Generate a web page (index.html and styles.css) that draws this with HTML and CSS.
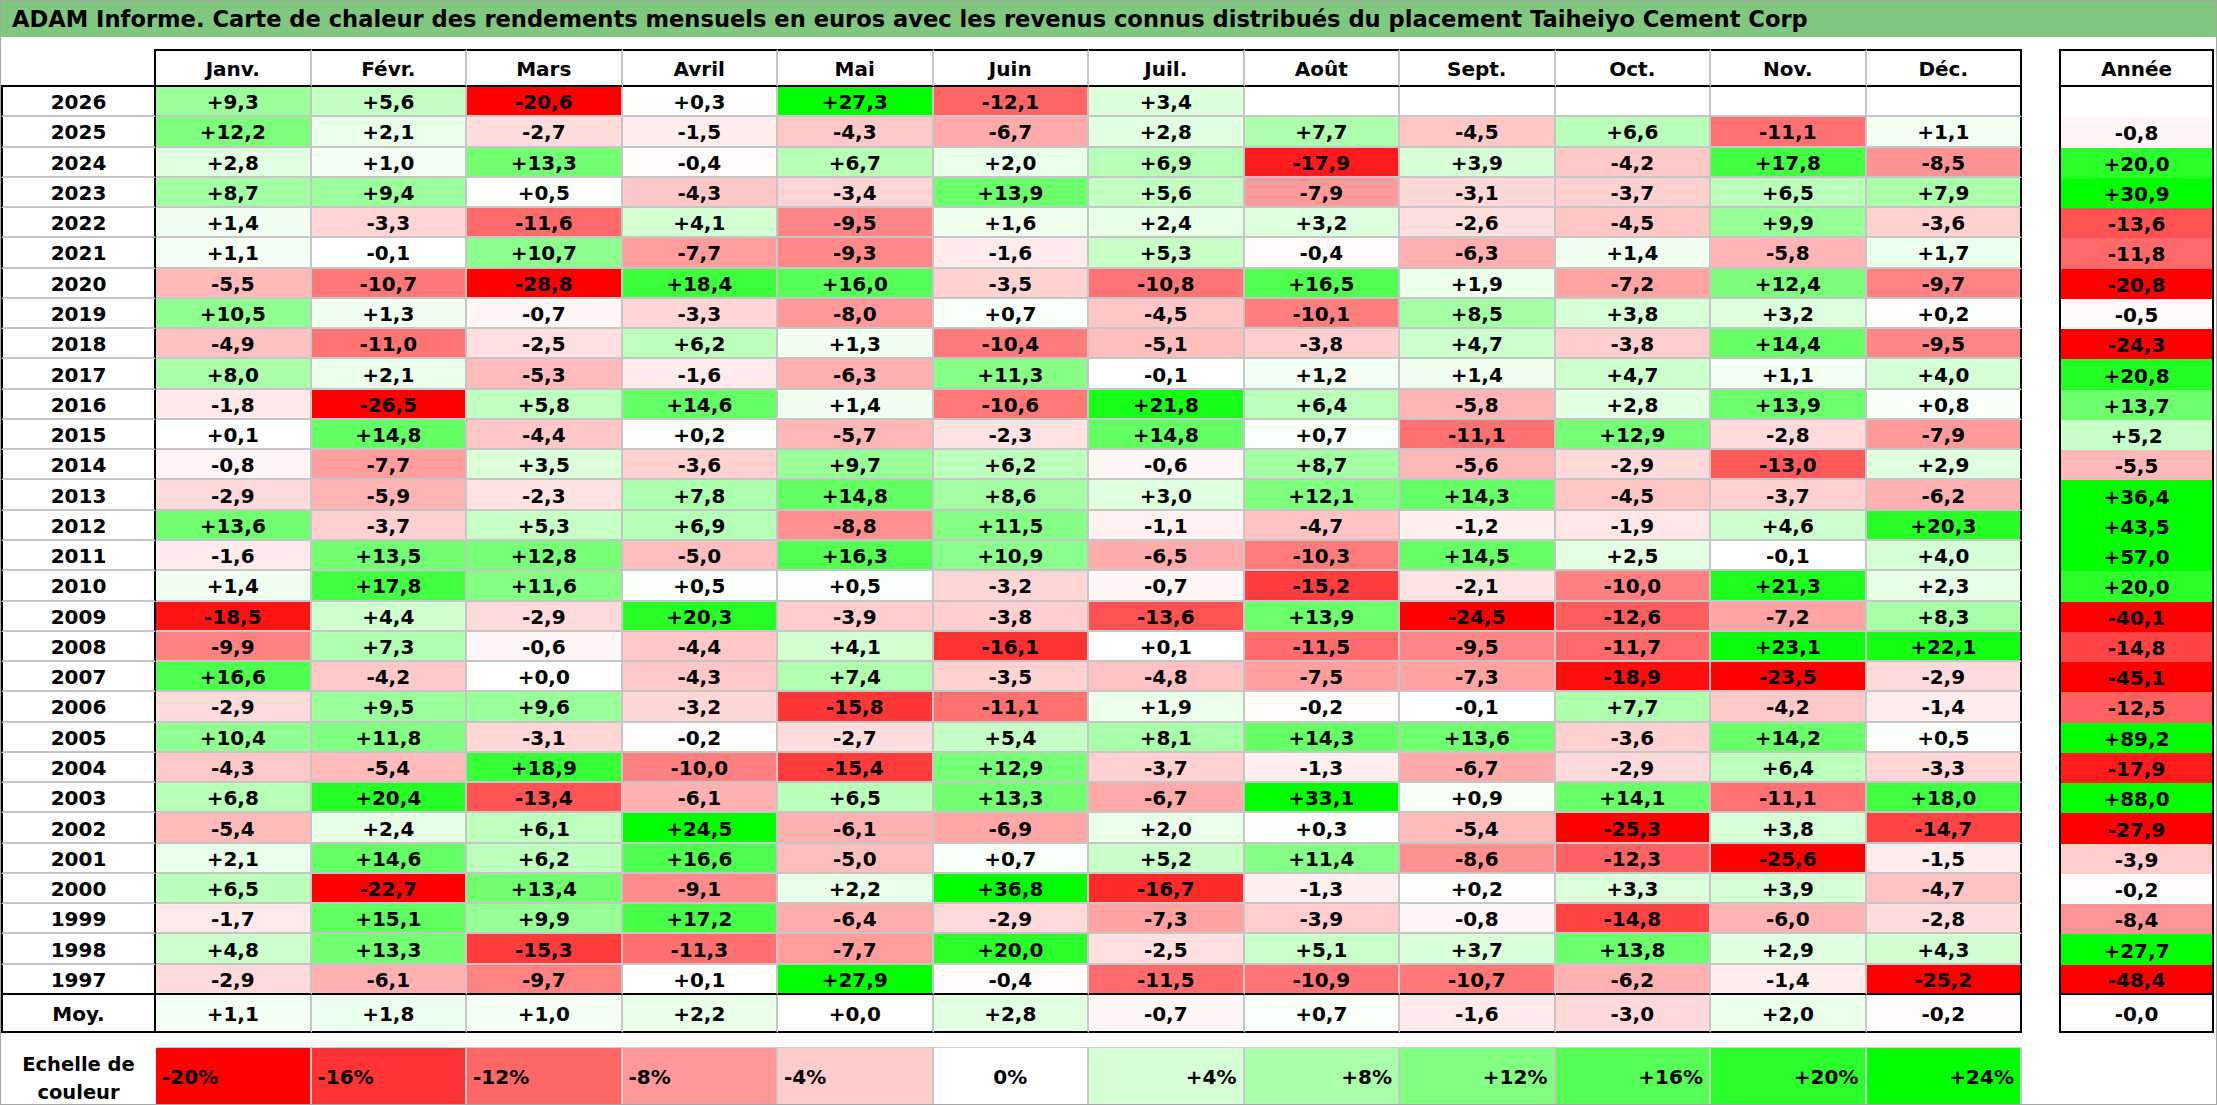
FILE: index.html
```html
<!DOCTYPE html>
<html lang="fr">
<head>
<meta charset="utf-8">
<title>ADAM Informe - Taiheiyo Cement Corp</title>
<link rel="stylesheet" href="styles.css">
</head>
<body>
<div class="frame">
  <div class="title">ADAM Informe. Carte de chaleur des rendements mensuels en euros avec les revenus connus distribués du placement Taiheiyo Cement Corp</div>
  <div class="tables">
    <div class="heat">
      <div class="r">
        <div class="corner"></div>
        <div class="hd">Janv.</div><div class="hd">Févr.</div><div class="hd">Mars</div><div class="hd">Avril</div><div class="hd">Mai</div><div class="hd">Juin</div><div class="hd">Juil.</div><div class="hd">Août</div><div class="hd">Sept.</div><div class="hd">Oct.</div><div class="hd">Nov.</div><div class="hd end">Déc.</div>
      </div>
      <div class="r"><div class="yl">2026</div><div class="v">+9,3</div><div class="v">+5,6</div><div class="v">-20,6</div><div class="v">+0,3</div><div class="v">+27,3</div><div class="v">-12,1</div><div class="v">+3,4</div><div class="v"></div><div class="v"></div><div class="v"></div><div class="v"></div><div class="v end"></div></div>
      <div class="r"><div class="yl">2025</div><div class="v">+12,2</div><div class="v">+2,1</div><div class="v">-2,7</div><div class="v">-1,5</div><div class="v">-4,3</div><div class="v">-6,7</div><div class="v">+2,8</div><div class="v">+7,7</div><div class="v">-4,5</div><div class="v">+6,6</div><div class="v">-11,1</div><div class="v end">+1,1</div></div>
      <div class="r"><div class="yl">2024</div><div class="v">+2,8</div><div class="v">+1,0</div><div class="v">+13,3</div><div class="v">-0,4</div><div class="v">+6,7</div><div class="v">+2,0</div><div class="v">+6,9</div><div class="v">-17,9</div><div class="v">+3,9</div><div class="v">-4,2</div><div class="v">+17,8</div><div class="v end">-8,5</div></div>
      <div class="r"><div class="yl">2023</div><div class="v">+8,7</div><div class="v">+9,4</div><div class="v">+0,5</div><div class="v">-4,3</div><div class="v">-3,4</div><div class="v">+13,9</div><div class="v">+5,6</div><div class="v">-7,9</div><div class="v">-3,1</div><div class="v">-3,7</div><div class="v">+6,5</div><div class="v end">+7,9</div></div>
      <div class="r"><div class="yl">2022</div><div class="v">+1,4</div><div class="v">-3,3</div><div class="v">-11,6</div><div class="v">+4,1</div><div class="v">-9,5</div><div class="v">+1,6</div><div class="v">+2,4</div><div class="v">+3,2</div><div class="v">-2,6</div><div class="v">-4,5</div><div class="v">+9,9</div><div class="v end">-3,6</div></div>
      <div class="r"><div class="yl">2021</div><div class="v">+1,1</div><div class="v">-0,1</div><div class="v">+10,7</div><div class="v">-7,7</div><div class="v">-9,3</div><div class="v">-1,6</div><div class="v">+5,3</div><div class="v">-0,4</div><div class="v">-6,3</div><div class="v">+1,4</div><div class="v">-5,8</div><div class="v end">+1,7</div></div>
      <div class="r"><div class="yl">2020</div><div class="v">-5,5</div><div class="v">-10,7</div><div class="v">-28,8</div><div class="v">+18,4</div><div class="v">+16,0</div><div class="v">-3,5</div><div class="v">-10,8</div><div class="v">+16,5</div><div class="v">+1,9</div><div class="v">-7,2</div><div class="v">+12,4</div><div class="v end">-9,7</div></div>
      <div class="r"><div class="yl">2019</div><div class="v">+10,5</div><div class="v">+1,3</div><div class="v">-0,7</div><div class="v">-3,3</div><div class="v">-8,0</div><div class="v">+0,7</div><div class="v">-4,5</div><div class="v">-10,1</div><div class="v">+8,5</div><div class="v">+3,8</div><div class="v">+3,2</div><div class="v end">+0,2</div></div>
      <div class="r"><div class="yl">2018</div><div class="v">-4,9</div><div class="v">-11,0</div><div class="v">-2,5</div><div class="v">+6,2</div><div class="v">+1,3</div><div class="v">-10,4</div><div class="v">-5,1</div><div class="v">-3,8</div><div class="v">+4,7</div><div class="v">-3,8</div><div class="v">+14,4</div><div class="v end">-9,5</div></div>
      <div class="r"><div class="yl">2017</div><div class="v">+8,0</div><div class="v">+2,1</div><div class="v">-5,3</div><div class="v">-1,6</div><div class="v">-6,3</div><div class="v">+11,3</div><div class="v">-0,1</div><div class="v">+1,2</div><div class="v">+1,4</div><div class="v">+4,7</div><div class="v">+1,1</div><div class="v end">+4,0</div></div>
      <div class="r"><div class="yl">2016</div><div class="v">-1,8</div><div class="v">-26,5</div><div class="v">+5,8</div><div class="v">+14,6</div><div class="v">+1,4</div><div class="v">-10,6</div><div class="v">+21,8</div><div class="v">+6,4</div><div class="v">-5,8</div><div class="v">+2,8</div><div class="v">+13,9</div><div class="v end">+0,8</div></div>
      <div class="r"><div class="yl">2015</div><div class="v">+0,1</div><div class="v">+14,8</div><div class="v">-4,4</div><div class="v">+0,2</div><div class="v">-5,7</div><div class="v">-2,3</div><div class="v">+14,8</div><div class="v">+0,7</div><div class="v">-11,1</div><div class="v">+12,9</div><div class="v">-2,8</div><div class="v end">-7,9</div></div>
      <div class="r"><div class="yl">2014</div><div class="v">-0,8</div><div class="v">-7,7</div><div class="v">+3,5</div><div class="v">-3,6</div><div class="v">+9,7</div><div class="v">+6,2</div><div class="v">-0,6</div><div class="v">+8,7</div><div class="v">-5,6</div><div class="v">-2,9</div><div class="v">-13,0</div><div class="v end">+2,9</div></div>
      <div class="r"><div class="yl">2013</div><div class="v">-2,9</div><div class="v">-5,9</div><div class="v">-2,3</div><div class="v">+7,8</div><div class="v">+14,8</div><div class="v">+8,6</div><div class="v">+3,0</div><div class="v">+12,1</div><div class="v">+14,3</div><div class="v">-4,5</div><div class="v">-3,7</div><div class="v end">-6,2</div></div>
      <div class="r"><div class="yl">2012</div><div class="v">+13,6</div><div class="v">-3,7</div><div class="v">+5,3</div><div class="v">+6,9</div><div class="v">-8,8</div><div class="v">+11,5</div><div class="v">-1,1</div><div class="v">-4,7</div><div class="v">-1,2</div><div class="v">-1,9</div><div class="v">+4,6</div><div class="v end">+20,3</div></div>
      <div class="r"><div class="yl">2011</div><div class="v">-1,6</div><div class="v">+13,5</div><div class="v">+12,8</div><div class="v">-5,0</div><div class="v">+16,3</div><div class="v">+10,9</div><div class="v">-6,5</div><div class="v">-10,3</div><div class="v">+14,5</div><div class="v">+2,5</div><div class="v">-0,1</div><div class="v end">+4,0</div></div>
      <div class="r"><div class="yl">2010</div><div class="v">+1,4</div><div class="v">+17,8</div><div class="v">+11,6</div><div class="v">+0,5</div><div class="v">+0,5</div><div class="v">-3,2</div><div class="v">-0,7</div><div class="v">-15,2</div><div class="v">-2,1</div><div class="v">-10,0</div><div class="v">+21,3</div><div class="v end">+2,3</div></div>
      <div class="r"><div class="yl">2009</div><div class="v">-18,5</div><div class="v">+4,4</div><div class="v">-2,9</div><div class="v">+20,3</div><div class="v">-3,9</div><div class="v">-3,8</div><div class="v">-13,6</div><div class="v">+13,9</div><div class="v">-24,5</div><div class="v">-12,6</div><div class="v">-7,2</div><div class="v end">+8,3</div></div>
      <div class="r"><div class="yl">2008</div><div class="v">-9,9</div><div class="v">+7,3</div><div class="v">-0,6</div><div class="v">-4,4</div><div class="v">+4,1</div><div class="v">-16,1</div><div class="v">+0,1</div><div class="v">-11,5</div><div class="v">-9,5</div><div class="v">-11,7</div><div class="v">+23,1</div><div class="v end">+22,1</div></div>
      <div class="r"><div class="yl">2007</div><div class="v">+16,6</div><div class="v">-4,2</div><div class="v">+0,0</div><div class="v">-4,3</div><div class="v">+7,4</div><div class="v">-3,5</div><div class="v">-4,8</div><div class="v">-7,5</div><div class="v">-7,3</div><div class="v">-18,9</div><div class="v">-23,5</div><div class="v end">-2,9</div></div>
      <div class="r"><div class="yl">2006</div><div class="v">-2,9</div><div class="v">+9,5</div><div class="v">+9,6</div><div class="v">-3,2</div><div class="v">-15,8</div><div class="v">-11,1</div><div class="v">+1,9</div><div class="v">-0,2</div><div class="v">-0,1</div><div class="v">+7,7</div><div class="v">-4,2</div><div class="v end">-1,4</div></div>
      <div class="r"><div class="yl">2005</div><div class="v">+10,4</div><div class="v">+11,8</div><div class="v">-3,1</div><div class="v">-0,2</div><div class="v">-2,7</div><div class="v">+5,4</div><div class="v">+8,1</div><div class="v">+14,3</div><div class="v">+13,6</div><div class="v">-3,6</div><div class="v">+14,2</div><div class="v end">+0,5</div></div>
      <div class="r"><div class="yl">2004</div><div class="v">-4,3</div><div class="v">-5,4</div><div class="v">+18,9</div><div class="v">-10,0</div><div class="v">-15,4</div><div class="v">+12,9</div><div class="v">-3,7</div><div class="v">-1,3</div><div class="v">-6,7</div><div class="v">-2,9</div><div class="v">+6,4</div><div class="v end">-3,3</div></div>
      <div class="r"><div class="yl">2003</div><div class="v">+6,8</div><div class="v">+20,4</div><div class="v">-13,4</div><div class="v">-6,1</div><div class="v">+6,5</div><div class="v">+13,3</div><div class="v">-6,7</div><div class="v">+33,1</div><div class="v">+0,9</div><div class="v">+14,1</div><div class="v">-11,1</div><div class="v end">+18,0</div></div>
      <div class="r"><div class="yl">2002</div><div class="v">-5,4</div><div class="v">+2,4</div><div class="v">+6,1</div><div class="v">+24,5</div><div class="v">-6,1</div><div class="v">-6,9</div><div class="v">+2,0</div><div class="v">+0,3</div><div class="v">-5,4</div><div class="v">-25,3</div><div class="v">+3,8</div><div class="v end">-14,7</div></div>
      <div class="r"><div class="yl">2001</div><div class="v">+2,1</div><div class="v">+14,6</div><div class="v">+6,2</div><div class="v">+16,6</div><div class="v">-5,0</div><div class="v">+0,7</div><div class="v">+5,2</div><div class="v">+11,4</div><div class="v">-8,6</div><div class="v">-12,3</div><div class="v">-25,6</div><div class="v end">-1,5</div></div>
      <div class="r"><div class="yl">2000</div><div class="v">+6,5</div><div class="v">-22,7</div><div class="v">+13,4</div><div class="v">-9,1</div><div class="v">+2,2</div><div class="v">+36,8</div><div class="v">-16,7</div><div class="v">-1,3</div><div class="v">+0,2</div><div class="v">+3,3</div><div class="v">+3,9</div><div class="v end">-4,7</div></div>
      <div class="r"><div class="yl">1999</div><div class="v">-1,7</div><div class="v">+15,1</div><div class="v">+9,9</div><div class="v">+17,2</div><div class="v">-6,4</div><div class="v">-2,9</div><div class="v">-7,3</div><div class="v">-3,9</div><div class="v">-0,8</div><div class="v">-14,8</div><div class="v">-6,0</div><div class="v end">-2,8</div></div>
      <div class="r"><div class="yl">1998</div><div class="v">+4,8</div><div class="v">+13,3</div><div class="v">-15,3</div><div class="v">-11,3</div><div class="v">-7,7</div><div class="v">+20,0</div><div class="v">-2,5</div><div class="v">+5,1</div><div class="v">+3,7</div><div class="v">+13,8</div><div class="v">+2,9</div><div class="v end">+4,3</div></div>
      <div class="r last"><div class="yl">1997</div><div class="v">-2,9</div><div class="v">-6,1</div><div class="v">-9,7</div><div class="v">+0,1</div><div class="v">+27,9</div><div class="v">-0,4</div><div class="v">-11,5</div><div class="v">-10,9</div><div class="v">-10,7</div><div class="v">-6,2</div><div class="v">-1,4</div><div class="v end">-25,2</div></div>
      <div class="r moy"><div class="yl">Moy.</div><div class="v">+1,1</div><div class="v">+1,8</div><div class="v">+1,0</div><div class="v">+2,2</div><div class="v">+0,0</div><div class="v">+2,8</div><div class="v">-0,7</div><div class="v">+0,7</div><div class="v">-1,6</div><div class="v">-3,0</div><div class="v">+2,0</div><div class="v end">-0,2</div></div>
    </div>
    <div class="annual">
      <div class="ahd">Année</div>
      <div class="av"></div>
      <div class="av">-0,8</div>
      <div class="av">+20,0</div>
      <div class="av">+30,9</div>
      <div class="av">-13,6</div>
      <div class="av">-11,8</div>
      <div class="av">-20,8</div>
      <div class="av">-0,5</div>
      <div class="av">-24,3</div>
      <div class="av">+20,8</div>
      <div class="av">+13,7</div>
      <div class="av">+5,2</div>
      <div class="av">-5,5</div>
      <div class="av">+36,4</div>
      <div class="av">+43,5</div>
      <div class="av">+57,0</div>
      <div class="av">+20,0</div>
      <div class="av">-40,1</div>
      <div class="av">-14,8</div>
      <div class="av">-45,1</div>
      <div class="av">-12,5</div>
      <div class="av">+89,2</div>
      <div class="av">-17,9</div>
      <div class="av">+88,0</div>
      <div class="av">-27,9</div>
      <div class="av">-3,9</div>
      <div class="av">-0,2</div>
      <div class="av">-8,4</div>
      <div class="av">+27,7</div>
      <div class="av alast">-48,4</div>
      <div class="av amoy">-0,0</div>
    </div>
  </div>
  <div class="scale">
    <div class="sl">Echelle de<br>couleur</div>
    <div class="sw neg s-20">-20%</div>
    <div class="sw neg s-16">-16%</div>
    <div class="sw neg s-12">-12%</div>
    <div class="sw neg s-8">-8%</div>
    <div class="sw neg s-4">-4%</div>
    <div class="sw zero s0">0%</div>
    <div class="sw pos s4">+4%</div>
    <div class="sw pos s8">+8%</div>
    <div class="sw pos s12">+12%</div>
    <div class="sw pos s16">+16%</div>
    <div class="sw pos s20">+20%</div>
    <div class="sw pos s24">+24%</div>
  </div>
</div>
<script src="script.js"></script>
</body>
</html>
```

FILE: styles.css
```css
* { box-sizing: border-box; margin: 0; padding: 0; }

body {
  margin: 0;
  background: #ffffff;
  color: #000000;
  font-family: "DejaVu Sans", Verdana, sans-serif;
  font-weight: 700;
}

.frame {
  width: 2217px;
  height: 1105px;
  border: 1px solid #a6a6a6;
  display: flex;
  flex-direction: column;
  overflow: hidden;
}

.title {
  height: 36px;
  background: #80c880;
  font-size: 22.6px;
  line-height: 36px;
  padding-left: 11px;
  white-space: nowrap;
}

.tables {
  display: flex;
  gap: 37px;
  margin-top: 12px;
}

.heat {
  display: grid;
  grid-template-columns: 155px repeat(12, 155.5px);
  grid-template-rows: 38px repeat(30, 30.2667px) 38px;
}

.annual {
  display: grid;
  grid-template-columns: 155px;
  grid-template-rows: 38px repeat(30, 30.2667px) 38px;
}

.r { display: contents; }

.corner, .hd, .yl, .v, .ahd, .av {
  display: flex;
  align-items: center;
  justify-content: center;
  font-size: 20px;
  white-space: nowrap;
  background: #ffffff;
}

.corner {
  border-right: 2px solid #000;
  border-bottom: 2px solid #000;
}

.hd {
  border-top: 2px solid #000;
  border-bottom: 2px solid #000;
  border-right: 2px solid #c6c6c6;
  padding-top: 2px;
}

.yl {
  border-left: 2px solid #000;
  border-right: 2px solid #000;
  border-bottom: 2px solid #c6c6c6;
  padding-top: 2px;
}

.v {
  border-right: 2px solid #c6c6c6;
  border-bottom: 2px solid #c6c6c6;
  padding-top: 2px;
}

.hd.end, .v.end { border-right-color: #000; }

.last > .yl, .last > .v { border-bottom-color: #000; }

.moy > .yl, .moy > .v { border-bottom: 2px solid #000; }

.ahd {
  border: 2px solid #000;
  padding-top: 2px;
}

.av {
  border-left: 2px solid #000;
  border-right: 2px solid #000;
  padding-top: 2px;
}

.av.alast { border-bottom: 2px solid #000; }

.av.amoy { border-bottom: 2px solid #000; }

.scale {
  display: grid;
  grid-template-columns: 155px repeat(12, 155.5px);
  height: 56px;
  margin-top: 14px;
}

.sl {
  font-size: 19.5px;
  line-height: 28px;
  text-align: center;
  padding-top: 4px;
}

.sw {
  display: flex;
  align-items: center;
  font-size: 20px;
  border-right: 2px solid #c8c8c8;
  border-top: 1px solid #d0d0d0;
  padding: 0 6px;
}

.sw.neg { justify-content: flex-start; }
.sw.zero { justify-content: center; }
.sw.pos { justify-content: flex-end; }

.s-20 { background: #ff0000; }
.s-16 { background: #ff3333; }
.s-12 { background: #ff6666; }
.s-8 { background: #ff9999; }
.s-4 { background: #ffcccc; }
.s0 { background: #ffffff; }
.s4 { background: #d5ffd5; }
.s8 { background: #aaffaa; }
.s12 { background: #80ff80; }
.s16 { background: #55ff55; }
.s20 { background: #2bff2b; }
.s24 { background: #00ff00; }
```

FILE: script.js
```js
(function () {
  function colour(v) {
    if (v < 0) {
      var t = Math.min(-v / 20, 1);
      var g = Math.round(255 * (1 - t));
      return 'rgb(255,' + g + ',' + g + ')';
    }
    if (v > 0) {
      var u = Math.min(v / 24, 1);
      var r = Math.round(255 * (1 - u));
      return 'rgb(' + r + ',255,' + r + ')';
    }
    return '#ffffff';
  }
  var cells = document.querySelectorAll('.v, .av');
  for (var i = 0; i < cells.length; i++) {
    var txt = cells[i].textContent.trim();
    if (!txt) continue;
    var v = parseFloat(txt.replace(',', '.'));
    if (isNaN(v)) continue;
    cells[i].style.backgroundColor = colour(v);
  }
})();
```
